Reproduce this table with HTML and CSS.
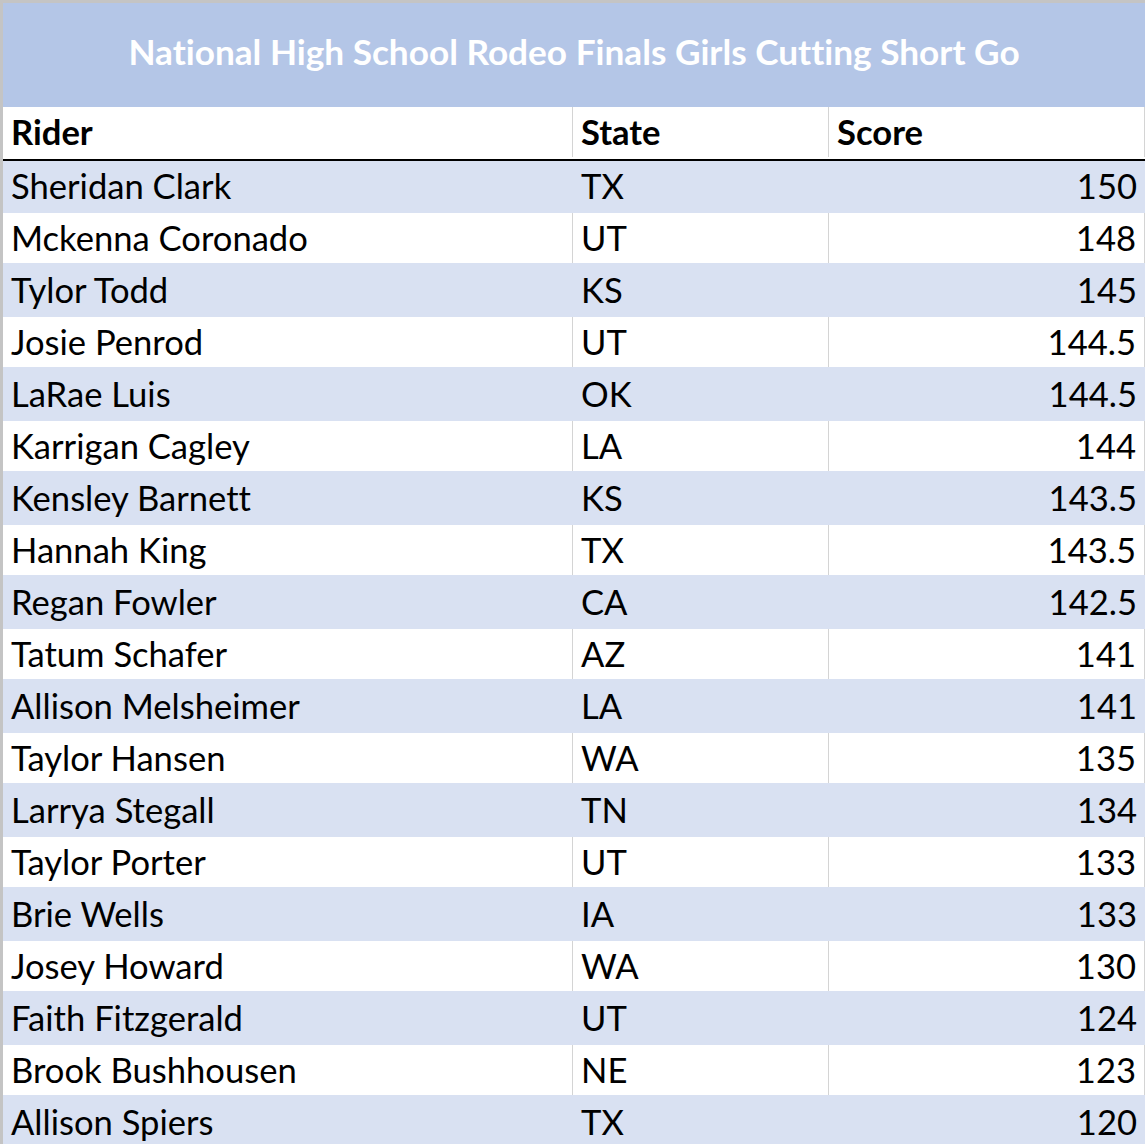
FILE: index.html
```html
<!DOCTYPE html>
<html lang="en">
<head>
<meta charset="utf-8">
<title>National High School Rodeo Finals Girls Cutting Short Go</title>
<link rel="stylesheet" href="styles.css">
</head>
<body>
<div class="sheet">
  <div class="title">National High School Rodeo Finals Girls Cutting Short Go</div>
  <div class="row head">
    <div class="cell">Rider</div>
    <div class="cell">State</div>
    <div class="cell">Score</div>
  </div>
  <div class="row band"><div class="cell">Sheridan Clark</div><div class="cell">TX</div><div class="cell num">150</div></div>
  <div class="row plain"><div class="cell">Mckenna Coronado</div><div class="cell">UT</div><div class="cell num">148</div></div>
  <div class="row band"><div class="cell">Tylor Todd</div><div class="cell">KS</div><div class="cell num">145</div></div>
  <div class="row plain"><div class="cell">Josie Penrod</div><div class="cell">UT</div><div class="cell num">144.5</div></div>
  <div class="row band"><div class="cell">LaRae Luis</div><div class="cell">OK</div><div class="cell num">144.5</div></div>
  <div class="row plain"><div class="cell">Karrigan Cagley</div><div class="cell">LA</div><div class="cell num">144</div></div>
  <div class="row band"><div class="cell">Kensley Barnett</div><div class="cell">KS</div><div class="cell num">143.5</div></div>
  <div class="row plain"><div class="cell">Hannah King</div><div class="cell">TX</div><div class="cell num">143.5</div></div>
  <div class="row band"><div class="cell">Regan Fowler</div><div class="cell">CA</div><div class="cell num">142.5</div></div>
  <div class="row plain"><div class="cell">Tatum Schafer</div><div class="cell">AZ</div><div class="cell num">141</div></div>
  <div class="row band"><div class="cell">Allison Melsheimer</div><div class="cell">LA</div><div class="cell num">141</div></div>
  <div class="row plain"><div class="cell">Taylor Hansen</div><div class="cell">WA</div><div class="cell num">135</div></div>
  <div class="row band"><div class="cell">Larrya Stegall</div><div class="cell">TN</div><div class="cell num">134</div></div>
  <div class="row plain"><div class="cell">Taylor Porter</div><div class="cell">UT</div><div class="cell num">133</div></div>
  <div class="row band"><div class="cell">Brie Wells</div><div class="cell">IA</div><div class="cell num">133</div></div>
  <div class="row plain"><div class="cell">Josey Howard</div><div class="cell">WA</div><div class="cell num">130</div></div>
  <div class="row band"><div class="cell">Faith Fitzgerald</div><div class="cell">UT</div><div class="cell num">124</div></div>
  <div class="row plain"><div class="cell">Brook Bushhousen</div><div class="cell">NE</div><div class="cell num">123</div></div>
  <div class="row band"><div class="cell">Allison Spiers</div><div class="cell">TX</div><div class="cell num">120</div></div>
</div>
</body>
</html>
```
FILE: styles.css
```css
html {
  overflow: hidden;
  background: #ffffff;
}
body {
  margin: 0;
  background: #ffffff;
  font-family: Lato, "Open Sans", sans-serif;
  font-size: 34.6px;
  font-variant-ligatures: none;
  color: #000000;
}
.sheet {
  border-top: 3px solid #c4c4c4;
  padding-left: 3px;
  background: linear-gradient(to right, #c4c4c4 0, #c4c4c4 3px, transparent 3px);
  width: 1145px;
  box-sizing: border-box;
}
.title {
  height: 104px;
  line-height: 97px;
  padding-bottom: 7px;
  box-sizing: border-box;
  background: #b4c6e7;
  color: #ffffff;
  font-size: 35.2px;
  font-weight: 700;
  text-align: center;
}
.row {
  display: grid;
  grid-template-columns: 570px 256px 316px;
  height: 52px;
  align-items: start;
}
.cell {
  padding: 0 8px;
  white-space: nowrap;
  overflow: hidden;
  box-sizing: border-box;
}
.num {
  text-align: right;
}
.head {
  background: #ffffff;
  border-bottom: 2px solid #000000;
  font-weight: 700;
}
.head .cell {
  height: 50px;
  line-height: 50px;
  border-right: 1px solid #d4d4d4;
}
.band {
  background: #d9e1f2;
}
.band .cell {
  height: 52px;
  line-height: 49px;
}
.plain {
  background: #d9e1f2;
}
.plain .cell {
  height: 50px;
  line-height: 49px;
  background: #ffffff;
  border-right: 1px solid #d4d4d4;
}
```
